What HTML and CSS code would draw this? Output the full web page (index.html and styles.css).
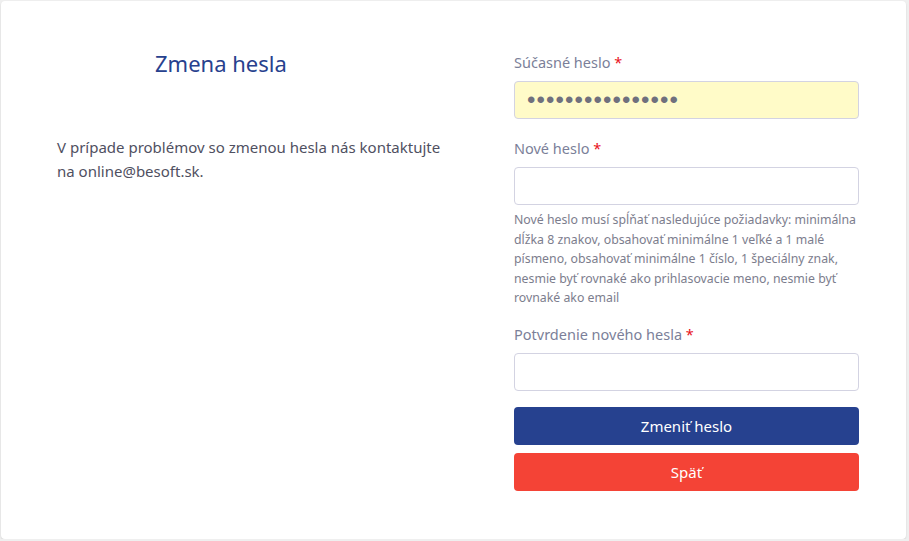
FILE: index.html
```html
<!DOCTYPE html>
<html lang="sk">
<head>
<meta charset="utf-8">
<title>Zmena hesla</title>
<link rel="stylesheet" href="styles.css">
</head>
<body>
<div class="card">
  <div class="info">
    <h1 class="title">Zmena hesla</h1>
    <p class="note">V prípade problémov so zmenou hesla nás kontaktujte na online@besoft.sk.</p>
  </div>
  <form class="form">
    <div class="group">
      <label class="label" for="cur">Súčasné heslo <span class="req">*</span></label>
      <input class="input input-filled" id="cur" type="password" value="aaaaaaaaaaaaaaaa">
    </div>
    <div class="group">
      <label class="label" for="new">Nové heslo <span class="req">*</span></label>
      <input class="input" id="new" type="password">
      <p class="help">Nové heslo musí spĺňať nasledujúce požiadavky: minimálna dĺžka 8 znakov, obsahovať minimálne 1 veľké a 1 malé písmeno, obsahovať minimálne 1 číslo, 1 špeciálny znak, nesmie byť rovnaké ako prihlasovacie meno, nesmie byť rovnaké ako email</p>
    </div>
    <div class="group group-last">
      <label class="label" for="conf">Potvrdenie nového hesla <span class="req">*</span></label>
      <input class="input" id="conf" type="password">
    </div>
    <button type="button" class="btn btn-primary">Zmeniť heslo</button>
    <button type="button" class="btn btn-danger">Späť</button>
  </form>
</div>
</body>
</html>
```

FILE: styles.css
```css
html, body {
  margin: 0;
  padding: 0;
  background: #efefef;
  font-family: "Noto Sans", "Open Sans", sans-serif;
}
.card {
  box-sizing: border-box;
  margin: 1px 3px 0 1px;
  width: 905px;
  height: 538px;
  background: #fff;
  border-radius: 4px;
  box-shadow: 0 1px 2px rgba(0,0,0,0.12);
  display: grid;
  grid-template-columns: 395px 345px;
  column-gap: 62px;
  padding: 0 47px 0 56px;
}
.info {
  padding-top: 47px;
}
.title {
  margin: 0;
  font-weight: 400;
  font-size: 22px;
  line-height: 30px;
  color: #27418e;
  padding-left: 98px;
}
.note {
  margin: 57px 0 0;
  font-size: 15px;
  line-height: 24px;
  color: #4f5061;
}
.form {
  padding-top: 49px;
  display: flex;
  flex-direction: column;
}
.group {
  display: flex;
  flex-direction: column;
  margin-bottom: 17px;
}
.group-last {
  margin-bottom: 16px;
}
.label {
  font-size: 14.5px;
  line-height: 24px;
  color: #7b7f99;
  margin-bottom: 7px;
}
.req {
  color: #e8101a;
}
.input {
  box-sizing: border-box;
  height: 38px;
  width: 100%;
  border: 1px solid #d3d3e2;
  border-radius: 4px;
  background: #fff;
  padding: 0 12px;
  font-family: "Liberation Sans", sans-serif;
  font-size: 24px;
  color: #6f707d;
  letter-spacing: 1.1px;
  outline: none;
}
.input-filled {
  background: #fffbc8;
}
.help {
  margin: 5px 0 -3px;
  font-size: 12.3px;
  line-height: 19.5px;
  color: #7c7d8d;
}
.btn {
  box-sizing: border-box;
  height: 38px;
  width: 100%;
  border: 0;
  border-radius: 4px;
  color: #fff;
  font-family: "Noto Sans", "Open Sans", sans-serif;
  font-size: 15px;
  cursor: pointer;
}
.btn-primary {
  background: #26418f;
  margin-bottom: 8px;
}
.btn-danger {
  background: #f44336;
}
```
